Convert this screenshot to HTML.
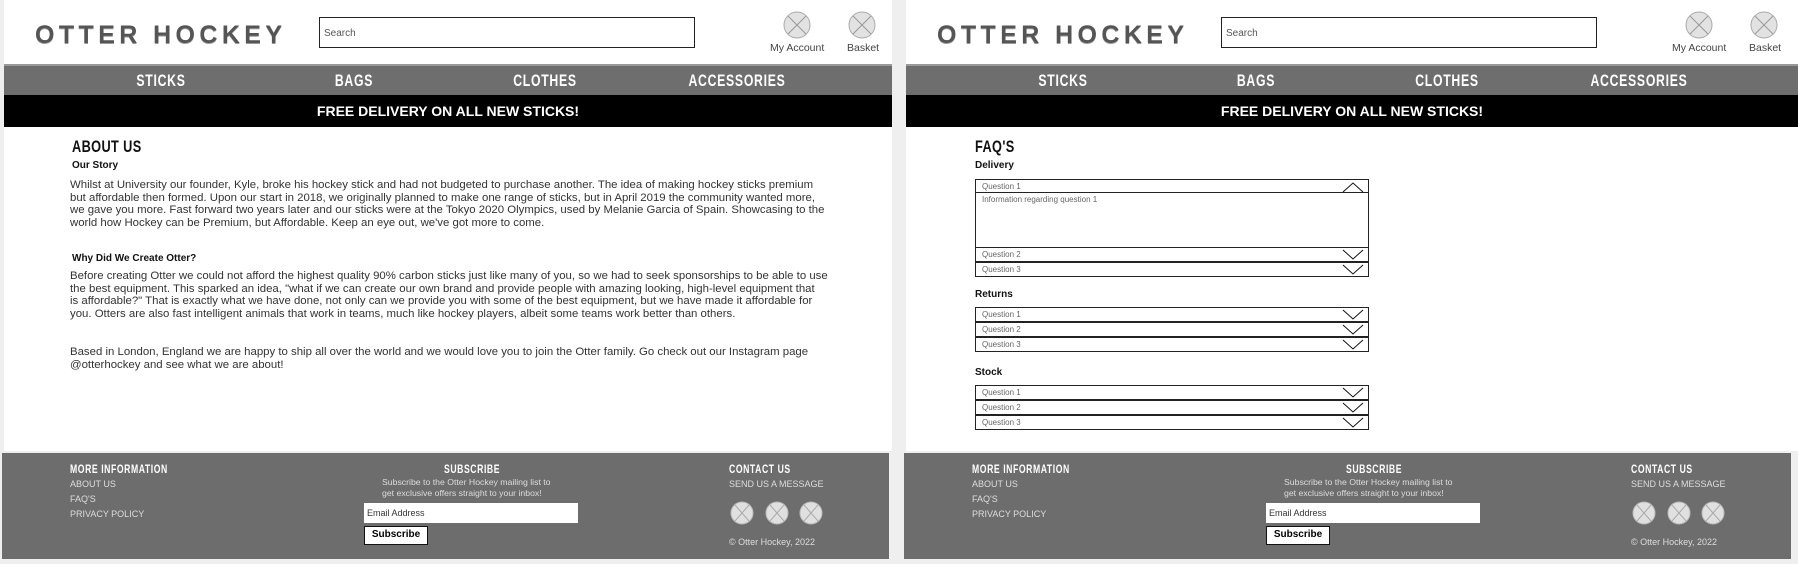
<!DOCTYPE html>
<html><head><style>
*{margin:0;padding:0;box-sizing:border-box}
body{width:1798px;height:564px;overflow:hidden;background:#efefef;font-family:"Liberation Sans",sans-serif;position:relative}
.p{position:absolute;top:0;width:888px;height:451px;background:#fff}
.a{position:absolute;white-space:nowrap}
.logo{left:31px;top:21px;font-size:25px;letter-spacing:4.4px;color:#555;font-weight:bold;text-shadow:0 1px 0 #999}
.search{left:315px;top:17px;width:376px;height:31px;border:1.5px solid #222;font-size:10px;color:#555;padding:10px 4px}
.ic{width:28px;height:28px}
.lbl{font-size:10.5px;color:#444}
.nav{left:0;top:64px;width:888px;height:31px;background:#6e6e6e;border-top:2px solid #999}
.nl{top:5px;font-weight:bold;font-size:17px;color:#fff;letter-spacing:1px;transform:translateX(-50%) scaleX(.72)}
.ban{left:0;top:95px;width:888px;height:32px;background:#000;color:#fff;font-weight:bold;font-size:14px;text-align:center;line-height:32px}
.h{font-weight:bold;font-size:17px;color:#111;letter-spacing:.5px;transform:scaleX(.75);transform-origin:left top}
.sh{font-size:10px;font-weight:bold;color:#111}
.txt{position:absolute;left:66px;white-space:nowrap;font-size:11.4px;line-height:12.7px;color:#333}
.ft{position:absolute;left:-2px;top:453px;width:887px;height:106px;background:#6d6d6d}
.fh{font-weight:bold;font-size:12px;color:#fff;letter-spacing:.8px;transform:scaleX(.72);transform-origin:left top}
.fl{font-size:9px;color:#ddd}
.row{position:absolute;left:69px;width:394px;height:15px;border:1.5px solid #222;font-size:8px;color:#666;padding:2px 6px;background:#fff}
.row svg{position:absolute;right:4px;top:1px}
</style></head><body>

<!-- LEFT PANEL -->
<div class="p" style="left:4px">
<div class="a logo">OTTER HOCKEY</div>
<div class="a search">Search</div>
<svg class="a ic" style="left:779px;top:11px" viewBox="0 0 28 28"><circle cx="14" cy="14" r="13" fill="#e2e2e2" stroke="#aaa"/><path d="M5 5L23 23M23 5L5 23" stroke="#999"/></svg>
<svg class="a ic" style="left:844px;top:11px" viewBox="0 0 28 28"><circle cx="14" cy="14" r="13" fill="#e2e2e2" stroke="#aaa"/><path d="M5 5L23 23M23 5L5 23" stroke="#999"/></svg>
<div class="a lbl" style="left:766px;top:42px">My Account</div>
<div class="a lbl" style="left:843px;top:42px">Basket</div>
<div class="a nav">
<div class="a nl" style="left:157px">STICKS</div>
<div class="a nl" style="left:350px">BAGS</div>
<div class="a nl" style="left:541px">CLOTHES</div>
<div class="a nl" style="left:733px">ACCESSORIES</div>
</div>
<div class="a ban">FREE DELIVERY ON ALL NEW STICKS!</div>
<div class="a h" style="left:68px;top:137px">ABOUT US</div>
<div class="a sh" style="left:68px;top:160px">Our Story</div>
<div class="txt" style="top:179px">Whilst at University our founder, Kyle, broke his hockey stick and had not budgeted to purchase another. The idea of making hockey sticks premium<br>but affordable then formed. Upon our start in 2018, we originally planned to make one range of sticks, but in April 2019 the community wanted more,<br>we gave you more. Fast forward two years later and our sticks were at the Tokyo 2020 Olympics, used by Melanie Garcia of Spain. Showcasing to the<br>world how Hockey can be Premium, but Affordable. Keep an eye out, we've got more to come.</div>
<div class="a sh" style="left:68px;top:253px">Why Did We Create Otter?</div>
<div class="txt" style="top:270px">Before creating Otter we could not afford the highest quality 90% carbon sticks just like many of you, so we had to seek sponsorships to be able to use<br>the best equipment. This sparked an idea, "what if we can create our own brand and provide people with amazing looking, high-level equipment that<br>is affordable?" That is exactly what we have done, not only can we provide you with some of the best equipment, but we have made it affordable for<br>you. Otters are also fast intelligent animals that work in teams, much like hockey players, albeit some teams work better than others.</div>
<div class="txt" style="top:346px">Based in London, England we are happy to ship all over the world and we would love you to join the Otter family. Go check out our Instagram page<br>@otterhockey and see what we are about!</div>
<div class="ft">
<div class="a fh" style="left:68px;top:9px">MORE INFORMATION</div>
<div class="a fl" style="left:68px;top:26px">ABOUT US</div>
<div class="a fl" style="left:68px;top:41px">FAQ'S</div>
<div class="a fl" style="left:68px;top:56px">PRIVACY POLICY</div>
<div class="a fh" style="left:442px;top:9px">SUBSCRIBE</div>
<div class="a fl" style="left:380px;top:24px;line-height:11px;font-size:8.7px">Subscribe to the Otter Hockey mailing list to<br>get exclusive offers straight to your inbox!</div>
<div class="a" style="left:362px;top:50px;width:214px;height:20px;background:#fff;font-size:9px;color:#333;padding:5px 3px">Email Address</div>
<div class="a" style="left:362px;top:73px;width:64px;height:19px;background:#fff;border:1.5px solid #111;font-size:10px;font-weight:bold;color:#000;text-align:center;line-height:16px">Subscribe</div>
<div class="a fh" style="left:727px;top:9px">CONTACT US</div>
<div class="a fl" style="left:727px;top:26px">SEND US A MESSAGE</div>
<svg class="a" style="left:728px;top:48px" width="94" height="24" viewBox="0 0 94 24"><g fill="#e0e0e0" stroke="#bbb"><circle cx="12" cy="12" r="11"/><circle cx="47" cy="12" r="11"/><circle cx="81" cy="12" r="11"/></g><path d="M5 4L19 20M19 4L5 20M40 4L54 20M54 4L40 20M74 4L88 20M88 4L74 20" stroke="#aaa"/></svg>
<div class="a fl" style="left:727px;top:84px;font-size:9px">© Otter Hockey, 2022</div>
</div>
</div>

<!-- RIGHT PANEL -->
<div class="p" style="left:906px;width:892px">
<div class="a logo">OTTER HOCKEY</div>
<div class="a search">Search</div>
<svg class="a ic" style="left:779px;top:11px" viewBox="0 0 28 28"><circle cx="14" cy="14" r="13" fill="#e2e2e2" stroke="#aaa"/><path d="M5 5L23 23M23 5L5 23" stroke="#999"/></svg>
<svg class="a ic" style="left:844px;top:11px" viewBox="0 0 28 28"><circle cx="14" cy="14" r="13" fill="#e2e2e2" stroke="#aaa"/><path d="M5 5L23 23M23 5L5 23" stroke="#999"/></svg>
<div class="a lbl" style="left:766px;top:42px">My Account</div>
<div class="a lbl" style="left:843px;top:42px">Basket</div>
<div class="a nav" style="width:892px">
<div class="a nl" style="left:157px">STICKS</div>
<div class="a nl" style="left:350px">BAGS</div>
<div class="a nl" style="left:541px">CLOTHES</div>
<div class="a nl" style="left:733px">ACCESSORIES</div>
</div>
<div class="a ban" style="width:892px">FREE DELIVERY ON ALL NEW STICKS!</div>
<div class="a h" style="left:69px;top:137px">FAQ'S</div>
<div class="a sh" style="left:69px;top:160px">Delivery</div>
<div class="row" style="top:179px">Question 1<svg width="22" height="12"><path d="M1 11L11 2L21 11" fill="none" stroke="#111"/></svg></div>
<div class="row" style="top:192px;height:56px">Information regarding question 1</div>
<div class="row" style="top:247px">Question 2<svg width="22" height="12"><path d="M1 1L11 10L21 1" fill="none" stroke="#111"/></svg></div>
<div class="row" style="top:262px">Question 3<svg width="22" height="12"><path d="M1 1L11 10L21 1" fill="none" stroke="#111"/></svg></div>
<div class="a sh" style="left:69px;top:289px">Returns</div>
<div class="row" style="top:307px">Question 1<svg width="22" height="12"><path d="M1 1L11 10L21 1" fill="none" stroke="#111"/></svg></div>
<div class="row" style="top:322px">Question 2<svg width="22" height="12"><path d="M1 1L11 10L21 1" fill="none" stroke="#111"/></svg></div>
<div class="row" style="top:337px">Question 3<svg width="22" height="12"><path d="M1 1L11 10L21 1" fill="none" stroke="#111"/></svg></div>
<div class="a sh" style="left:69px;top:367px">Stock</div>
<div class="row" style="top:385px">Question 1<svg width="22" height="12"><path d="M1 1L11 10L21 1" fill="none" stroke="#111"/></svg></div>
<div class="row" style="top:400px">Question 2<svg width="22" height="12"><path d="M1 1L11 10L21 1" fill="none" stroke="#111"/></svg></div>
<div class="row" style="top:415px">Question 3<svg width="22" height="12"><path d="M1 1L11 10L21 1" fill="none" stroke="#111"/></svg></div>
<div class="ft">
<div class="a fh" style="left:68px;top:9px">MORE INFORMATION</div>
<div class="a fl" style="left:68px;top:26px">ABOUT US</div>
<div class="a fl" style="left:68px;top:41px">FAQ'S</div>
<div class="a fl" style="left:68px;top:56px">PRIVACY POLICY</div>
<div class="a fh" style="left:442px;top:9px">SUBSCRIBE</div>
<div class="a fl" style="left:380px;top:24px;line-height:11px;font-size:8.7px">Subscribe to the Otter Hockey mailing list to<br>get exclusive offers straight to your inbox!</div>
<div class="a" style="left:362px;top:50px;width:214px;height:20px;background:#fff;font-size:9px;color:#333;padding:5px 3px">Email Address</div>
<div class="a" style="left:362px;top:73px;width:64px;height:19px;background:#fff;border:1.5px solid #111;font-size:10px;font-weight:bold;color:#000;text-align:center;line-height:16px">Subscribe</div>
<div class="a fh" style="left:727px;top:9px">CONTACT US</div>
<div class="a fl" style="left:727px;top:26px">SEND US A MESSAGE</div>
<svg class="a" style="left:728px;top:48px" width="94" height="24" viewBox="0 0 94 24"><g fill="#e0e0e0" stroke="#bbb"><circle cx="12" cy="12" r="11"/><circle cx="47" cy="12" r="11"/><circle cx="81" cy="12" r="11"/></g><path d="M5 4L19 20M19 4L5 20M40 4L54 20M54 4L40 20M74 4L88 20M88 4L74 20" stroke="#aaa"/></svg>
<div class="a fl" style="left:727px;top:84px;font-size:9px">© Otter Hockey, 2022</div>
</div>
</div>
</body></html>
